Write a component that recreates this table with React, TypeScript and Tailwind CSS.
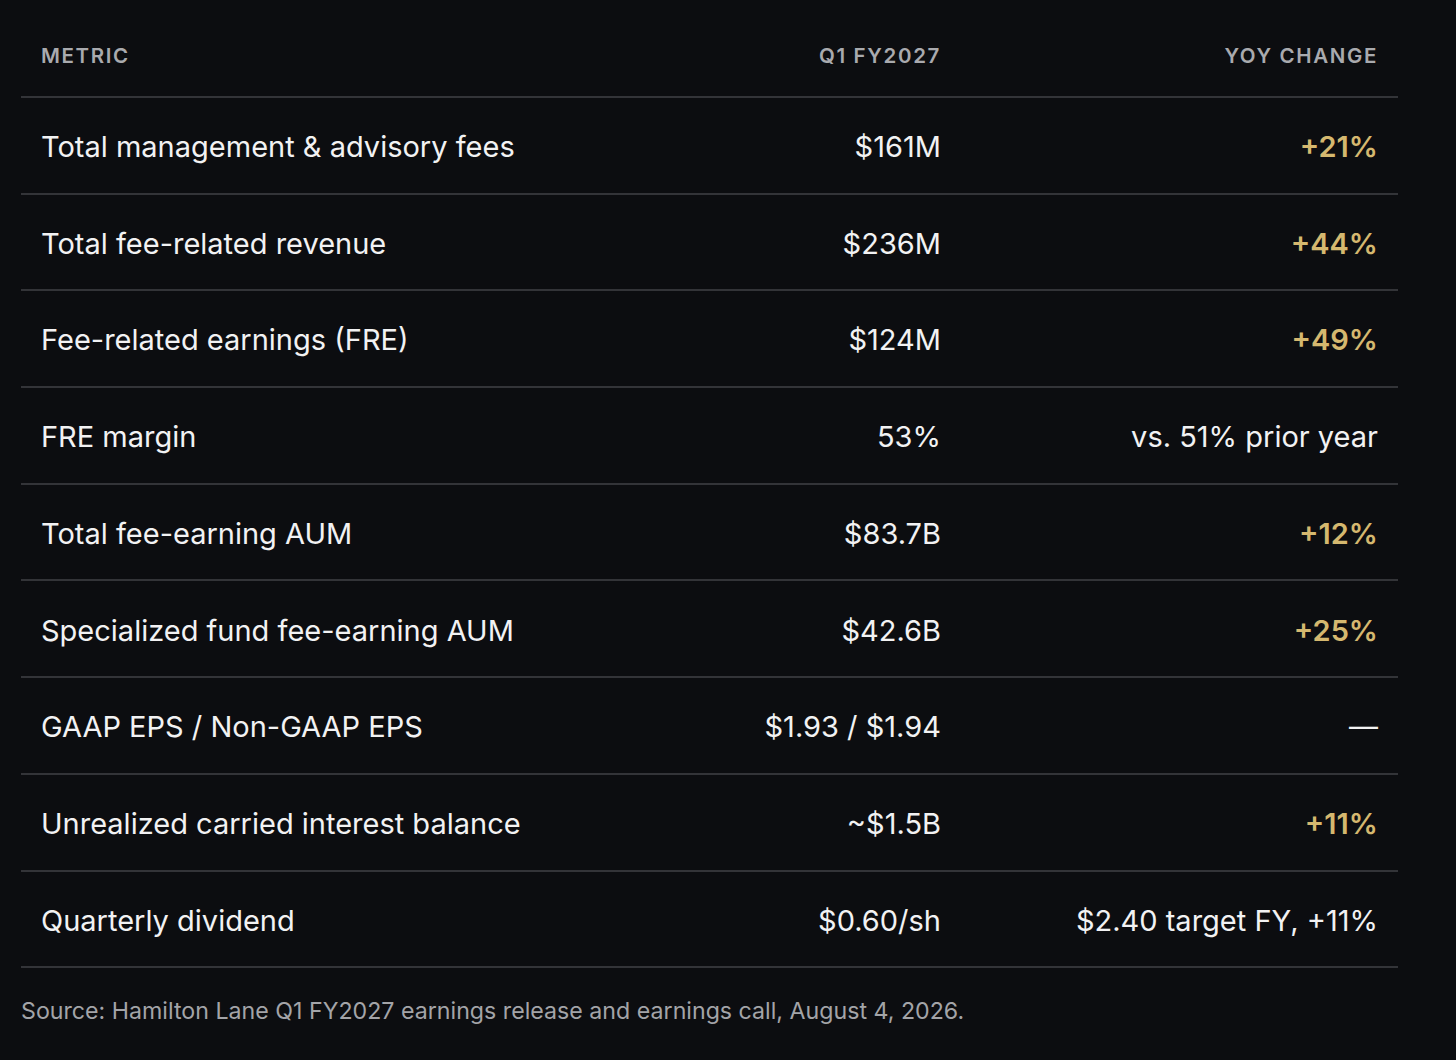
import React from "react";

type Row = { metric: string; value: string; change: string; gold: boolean };

const rows: Row[] = [
  { metric: "Total management & advisory fees", value: "$161M", change: "+21%", gold: true },
  { metric: "Total fee-related revenue", value: "$236M", change: "+44%", gold: true },
  { metric: "Fee-related earnings (FRE)", value: "$124M", change: "+49%", gold: true },
  { metric: "FRE margin", value: "53%", change: "vs. 51% prior year", gold: false },
  { metric: "Total fee-earning AUM", value: "$83.7B", change: "+12%", gold: true },
  { metric: "Specialized fund fee-earning AUM", value: "$42.6B", change: "+25%", gold: true },
  { metric: "GAAP EPS / Non-GAAP EPS", value: "$1.93 / $1.94", change: "—", gold: false },
  { metric: "Unrealized carried interest balance", value: "~$1.5B", change: "+11%", gold: true },
  { metric: "Quarterly dividend", value: "$0.60/sh", change: "$2.40 target FY, +11%", gold: false },
];

export default function App() {
  return (
    <div
      className="min-h-screen w-full bg-[#0c0d10] text-[#f2f2f3]"
      style={{ fontFamily: "Inter, 'Noto Sans', sans-serif" }}
    >
      <div className="pl-[21px] pr-[58px]">
        <div className="grid grid-cols-[minmax(0,1fr)_240px_437px] h-[98px] items-center border-b-2 border-[#333438] text-[20.5px] font-semibold tracking-[0.08em] text-[#a9aaae]">
          <div className="px-5 pt-[16px]">METRIC</div>
          <div className="px-5 pt-[16px] text-right">Q1 FY2027</div>
          <div className="px-5 pt-[16px] text-right">YOY CHANGE</div>
        </div>
        {rows.map((r) => (
          <div
            key={r.metric}
            className="grid grid-cols-[minmax(0,1fr)_240px_437px] h-[96.7px] items-center border-b-2 border-[#333438] text-[29px]"
          >
            <div className="px-5 pt-[3px] whitespace-nowrap">{r.metric}</div>
            <div className="px-5 pt-[3px] text-right whitespace-nowrap">{r.value}</div>
            <div
              className={
                r.gold
                  ? "px-5 pt-[3px] text-right whitespace-nowrap font-semibold text-[#d5b86f]"
                  : "px-5 pt-[3px] text-right whitespace-nowrap"
              }
            >
              {r.change}
            </div>
          </div>
        ))}
        <p className="pt-[26px] text-[23.2px] text-[#a3a4a8]">
          Source: Hamilton Lane Q1 FY2027 earnings release and earnings call, August 4, 2026.
        </p>
      </div>
    </div>
  );
}
